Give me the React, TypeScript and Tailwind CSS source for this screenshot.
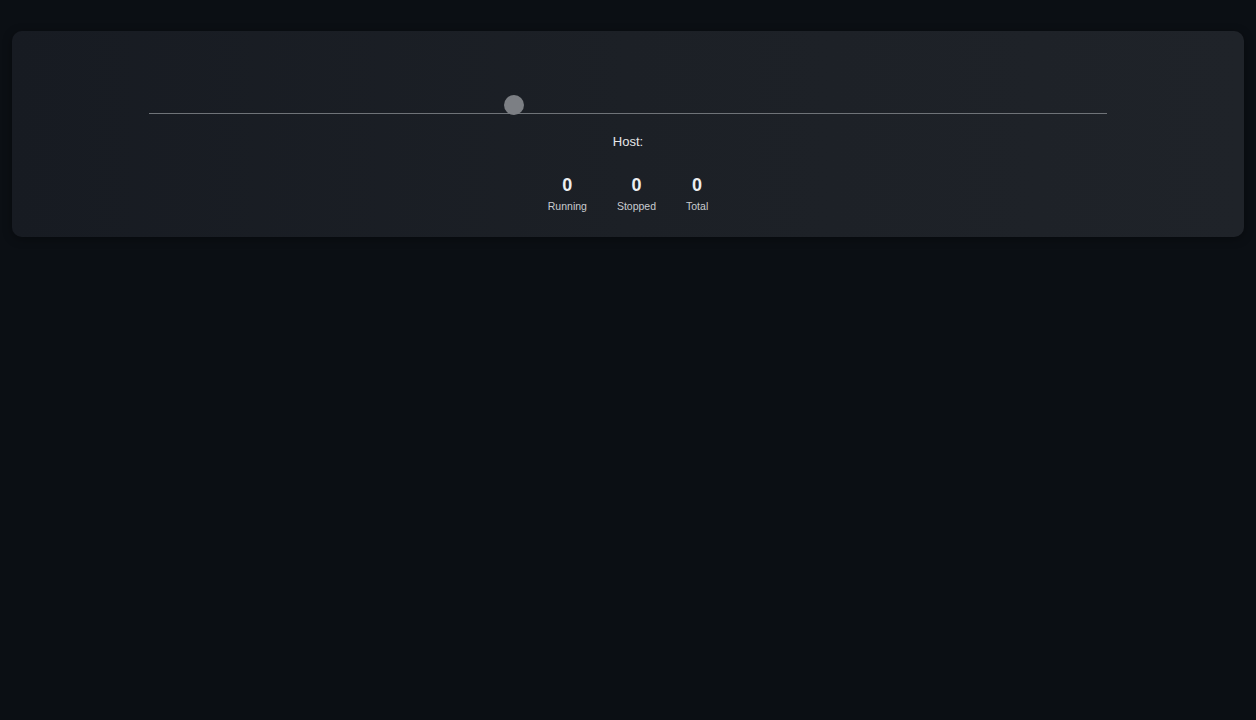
export default function App() {
  const stats = [
    { label: "Running", value: 0 },
    { label: "Stopped", value: 0 },
    { label: "Total", value: 0 },
  ];

  return (
    <div
      className="min-h-screen bg-[#0b0f14] px-3 pt-[31px]"
      style={{ fontFamily: '"Liberation Sans", Arial, sans-serif' }}
    >
      <div className="h-[206px] rounded-[10px] bg-gradient-to-r from-[#171b22] via-[#1c2026] to-[#1f2329] shadow-[0_2px_10px_rgba(0,0,0,0.35)]">
        {/* slider */}
        <div className="px-[137px] pt-[82px]">
          <div className="relative h-px bg-[#6f7378]">
            <div className="absolute left-[38.1%] -top-[18px] size-5 -translate-x-1/2 rounded-full bg-[#7c7f84]" />
          </div>
        </div>

        <div className="mt-[20px] text-center text-[13px] leading-4 text-[#e6e7e9]">Host:</div>

        <div className="mt-[25px] flex justify-center gap-[30px]">
          {stats.map((s) => (
            <div key={s.label} className="flex flex-col items-center">
              <span className="text-[18px] font-bold leading-5 text-[#eceef0]">{s.value}</span>
              <span className="mt-1 text-[10.5px] leading-[14px] text-[#c9ccd0]">{s.label}</span>
            </div>
          ))}
        </div>
      </div>
    </div>
  );
}
